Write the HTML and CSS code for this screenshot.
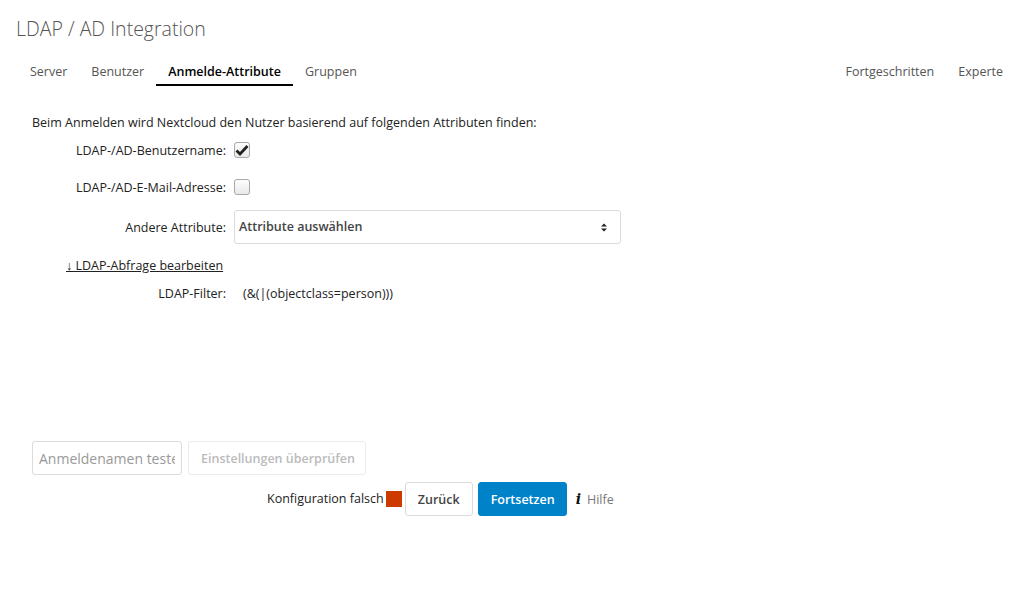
FILE: index.html
```
<!DOCTYPE html>
<html lang="de">
<head>
<meta charset="utf-8">
<title>LDAP / AD Integration</title>
<link rel="stylesheet" href="styles.css">
</head>
<body>
<div class="page">
  <h2 class="title">LDAP / AD Integration</h2>
  <nav class="tabs">
    <ul class="tab-group">
      <li class="tab">Server</li>
      <li class="tab">Benutzer</li>
      <li class="tab active">Anmelde-Attribute</li>
      <li class="tab">Gruppen</li>
    </ul>
    <ul class="tab-group">
      <li class="tab">Fortgeschritten</li>
      <li class="tab">Experte</li>
    </ul>
  </nav>
  <section class="content">
    <p class="intro">Beim Anmelden wird Nextcloud den Nutzer basierend auf folgenden Attributen finden:</p>
    <div class="row row-1">
      <span class="label">LDAP-/AD-Benutzername:</span>
      <span class="checkbox checked">
        <svg width="14" height="12" viewBox="0 0 14 12"><path d="M1.5 6.5 L5 10 L12.5 2" fill="none" stroke="#222" stroke-width="2.8" stroke-linejoin="miter"/></svg>
      </span>
    </div>
    <div class="row row-2">
      <span class="label">LDAP-/AD-E-Mail-Adresse:</span>
      <span class="checkbox"></span>
    </div>
    <div class="row row-3">
      <span class="label">Andere Attribute:</span>
      <div class="select">
        <span class="select-text">Attribute auswählen</span>
        <svg class="select-arrow" width="6" height="9" viewBox="0 0 6 9"><path d="M0 3.6 L3 0.6 L6 3.6 Z M0 5.4 L3 8.4 L6 5.4 Z" fill="#222"/></svg>
      </div>
    </div>
    <div class="row row-4">
      <a class="toggle-link">↓ LDAP-Abfrage bearbeiten</a>
    </div>
    <div class="row row-5">
      <span class="label">LDAP-Filter:</span>
      <span class="filter">(&amp;(|(objectclass=person)))</span>
    </div>
    <div class="test-row">
      <input class="test-input" type="text" placeholder="Anmeldenamen testen">
      <button class="btn btn-disabled">Einstellungen überprüfen</button>
    </div>
    <div class="nav-row">
      <span class="status">Konfiguration falsch</span>
      <span class="status-box"></span>
      <button class="btn btn-back">Zurück</button>
      <button class="btn btn-primary">Fortsetzen</button>
      <span class="info-i">i</span>
      <span class="help">Hilfe</span>
    </div>
  </section>
</div>
</body>
</html>
```
FILE: styles.css
```
* { box-sizing: border-box; }
html, body { margin: 0; padding: 0; background: #fff; }
body {
  font-family: "Open Sans", "Liberation Sans", sans-serif;
  font-size: 12.5px;
  color: #222;
}
.title {
  margin: 0;
  padding: 15px 0 0 16px;
  font-size: 19.5px;
  line-height: 28px;
  font-weight: 300;
  color: #555;
}
.tabs {
  display: flex;
  justify-content: space-between;
  margin-top: 15px;
  padding: 0 10px 0 18px;
}
.tab-group {
  list-style: none;
  margin: 0;
  padding: 0;
  display: flex;
}
.tab {
  padding: 2px 12px 0;
  height: 28px;
  line-height: 24px;
  color: #555;
  border-bottom: 2px solid transparent;
}
.tab.active {
  color: #000;
  font-weight: 600;
  border-bottom-color: #000;
}
.content {
  padding-left: 32px;
  margin-top: 27px;
}
.intro {
  margin: 0;
  line-height: 20px;
  height: 20px;
}
.row {
  display: flex;
  align-items: center;
}
.label {
  width: 194px;
  text-align: right;
  margin-right: 8px;
  flex: none;
}
.row-1 { margin-top: 4px; height: 26px; }
.row-2 { margin-top: 11px; height: 26px; }
.row-3 { margin-top: 10px; height: 34px; }
.row-4 { margin-top: 11px; height: 20px; padding-left: 34px; }
.row-5 { margin-top: 8px; height: 20px; }
.checkbox {
  width: 16px;
  height: 16px;
  border: 1px solid #a8a8a8;
  border-radius: 3px;
  background: linear-gradient(#fdfdfd, #e9e9e9);
  display: flex;
  align-items: center;
  justify-content: center;
}
.select {
  width: 387px;
  height: 34px;
  border: 1px solid #dbdbdb;
  border-radius: 3px;
  display: flex;
  align-items: center;
  justify-content: space-between;
  padding: 0 13px 0 4px;
}
.select-text {
  font-weight: 600;
  color: #444;
  margin-top: -1px;
}
.toggle-link {
  color: #222;
  text-decoration: underline;
}
.filter {
  margin-left: 9px;
}
.test-row {
  display: flex;
  align-items: center;
  margin-top: 138px;
  height: 34px;
}
.test-input {
  width: 150px;
  height: 34px;
  border: 1px solid #dbdbdb;
  border-radius: 3px;
  padding: 0 6px;
  font-family: inherit;
  font-size: 14px;
  color: #222;
  margin: 0;
}
.test-input::placeholder { color: #999; }
.btn {
  font-family: inherit;
  font-size: 12.5px;
  height: 34px;
  border-radius: 3px;
  margin: 0;
  padding: 0 12px;
  cursor: pointer;
  white-space: nowrap;
}
.btn-disabled {
  margin-left: 6px;
  width: 178px;
  background: #fff;
  border: 1px solid #ebebeb;
  color: #bbb;
  font-weight: 600;
}
.nav-row {
  display: flex;
  align-items: center;
  margin-top: 7px;
  height: 34px;
  padding-left: 235px;
}
.status {
  line-height: 20px;
}
.status-box {
  width: 16px;
  height: 16px;
  background: #cc3a00;
  margin-left: 2px;
}
.btn-back {
  margin-left: 3px;
  width: 68px;
  background: #fff;
  border: 1px solid #dbdbdb;
  color: #444;
  font-weight: 600;
}
.btn-primary {
  margin-left: 5px;
  width: 89px;
  background: #0082c9;
  border: 1px solid #0082c9;
  color: #fff;
  font-weight: 600;
}
.info-i {
  margin-left: 9px;
  font-family: "DejaVu Serif", "Liberation Serif", serif;
  font-style: italic;
  font-weight: 700;
  font-size: 14px;
  color: #111;
}
.help {
  margin-left: 6px;
  color: #777;
}
```
